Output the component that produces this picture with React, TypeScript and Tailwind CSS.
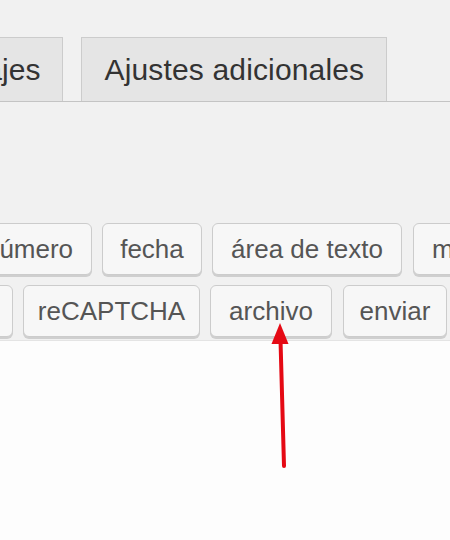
import React from "react";

const Btn = ({ label, className = "" }: { label: string; className?: string }) => (
  <div
    className={`shrink-0 h-[52px] flex items-center justify-center border border-[#cccccc] rounded-[6px] bg-[#f7f7f7] shadow-[0_2px_0_#cfcfcf] text-[26px] text-[#555555] whitespace-nowrap ${className}`}
  >
    {label}
  </div>
);

export default function App() {
  return (
    <div
      className="relative w-[450px] h-[540px] overflow-hidden bg-[#fdfdfd]"
      style={{ fontFamily: '"Liberation Sans", Arial, sans-serif' }}
    >
      <div className="bg-[#f1f1f1] pt-[37px]">
        <div className="flex gap-[18px] border-b border-[#c4c4c4] ml-[-111px]">
          <div className="shrink-0 h-[64px] flex items-center px-[22px] border border-b-0 border-[#cccccc] bg-[#e5e5e5] text-[30px] text-[#333333] whitespace-nowrap">
            Mensajes
          </div>
          <div className="shrink-0 w-[306px] h-[64px] flex items-center justify-center border border-b-0 border-[#cccccc] bg-[#e5e5e5] text-[30px] tracking-[0.15px] text-[#333333] whitespace-nowrap">
            Ajustes adicionales
          </div>
        </div>
        <div className="pt-[121px] pb-[3px] border-b border-[#e4e4e4] flex flex-col gap-[10px]">
          <div className="flex gap-[10px] ml-[-34px]">
            <Btn label="número" className="w-[126px]" />
            <Btn label="fecha" className="w-[100px]" />
            <Btn label="área de texto" className="w-[190px]" />
            <Btn label="menú desplegable" className="px-[18px] ml-[1px]" />
          </div>
          <div className="flex gap-[10px] ml-[-165px]">
            <Btn label="cuestionario" className="w-[178px]" />
            <Btn label="reCAPTCHA" className="w-[177px] text-[25px]" />
            <Btn label="archivo" className="w-[122px]" />
            <Btn label="enviar" className="w-[104px] ml-[1px]" />
          </div>
        </div>
      </div>
      <svg
        className="absolute left-0 top-0"
        width="450"
        height="540"
        viewBox="0 0 450 540"
      >
        <line x1="284" y1="466" x2="280.5" y2="340" stroke="#e50914" strokeWidth="4" strokeLinecap="round" />
        <polygon points="280,323 271.5,344 288.5,344" fill="#e50914" />
      </svg>
    </div>
  );
}
